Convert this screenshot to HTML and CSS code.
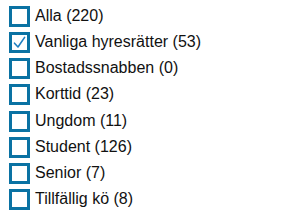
FILE: index.html
```html
<!DOCTYPE html>
<html>
<head>
<meta charset="utf-8">
<link rel="stylesheet" href="styles.css">
</head>
<body>
<ul class="filters">
  <li class="opt"><span class="box"></span><span class="label">Alla (220)</span></li>
  <li class="opt"><span class="box"><svg class="check" viewBox="0 0 15 15"><path d="M2.5 8.2 L6 12 L12.6 2.4" /></svg></span><span class="label">Vanliga hyresrätter (53)</span></li>
  <li class="opt"><span class="box"></span><span class="label">Bostadssnabben (0)</span></li>
  <li class="opt"><span class="box"></span><span class="label">Korttid (23)</span></li>
  <li class="opt"><span class="box"></span><span class="label">Ungdom (11)</span></li>
  <li class="opt"><span class="box"></span><span class="label">Student (126)</span></li>
  <li class="opt"><span class="box"></span><span class="label">Senior (7)</span></li>
  <li class="opt"><span class="box"></span><span class="label">Tillfällig kö (8)</span></li>
</ul>
</body>
</html>
```
FILE: styles.css
```css
html, body {
  margin: 0;
  padding: 0;
  background: #ffffff;
}
.filters {
  list-style: none;
  margin: 0;
  padding: 6px 0 0 9px;
  font-family: "Liberation Sans", Arial, sans-serif;
  font-size: 16px;
  color: #111111;
}
.opt {
  display: flex;
  align-items: center;
  gap: 5px;
  height: 21px;
  margin-bottom: 5.15px;
}
.box {
  box-sizing: border-box;
  width: 21px;
  height: 21px;
  border: 3px solid #0a72a3;
  display: flex;
  align-items: center;
  justify-content: center;
  flex: none;
}
.check {
  width: 15px;
  height: 15px;
}
.check path {
  fill: none;
  stroke: #1f7fc0;
  stroke-width: 1.6;
  stroke-linecap: round;
  stroke-linejoin: round;
}
.label {
  line-height: 21px;
  margin-top: -2px;
}
```
